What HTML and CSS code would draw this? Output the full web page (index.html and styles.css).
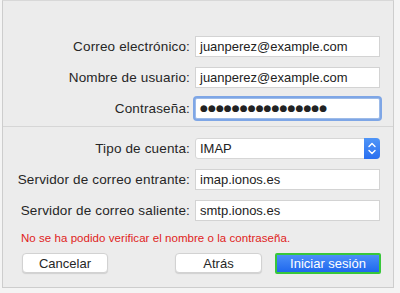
FILE: index.html
```html
<!DOCTYPE html>
<html lang="es">
<head>
  <meta charset="UTF-8">
  <meta name="viewport" content="width=device-width, initial-scale=1.0">
  <title>Añadir cuenta</title>
  <link rel="stylesheet" href="styles.css">
</head>
<body>
  <div class="window">
    <div class="form-grid">
      <label class="field-label">Correo electrónico:</label>
      <div class="field">juanperez@example.com</div>
      <label class="field-label">Nombre de usuario:</label>
      <div class="field">juanperez@example.com</div>
      <label class="field-label">Contraseña:</label>
      <div class="field field-focus"><span class="dots">●●●●●●●●●●●●●●●●</span></div>
    </div>
    <div class="divider"></div>
    <div class="form-grid">
      <label class="field-label">Tipo de cuenta:</label>
      <div class="field select">
        <span>IMAP</span>
        <span class="stepper">
          <svg width="8" height="13" viewBox="0 0 8 13"><path d="M1 4.5 L4 1.5 L7 4.5 M1 8.5 L4 11.5 L7 8.5" fill="none" stroke="#fff" stroke-width="1.4" stroke-linecap="round" stroke-linejoin="round"/></svg>
        </span>
      </div>
      <label class="field-label">Servidor de correo entrante:</label>
      <div class="field">imap.ionos.es</div>
      <label class="field-label">Servidor de correo saliente:</label>
      <div class="field">smtp.ionos.es</div>
    </div>
    <p class="error">No se ha podido verificar el nombre o la contraseña.</p>
    <div class="actions">
      <button class="btn btn-cancel">Cancelar</button>
      <button class="btn btn-back">Atrás</button>
      <button class="btn btn-primary">Iniciar sesión</button>
    </div>
  </div>
</body>
</html>
```

FILE: styles.css
```css
body { margin: 0; background: #f4f4f4; font-family: "Liberation Sans", Arial, sans-serif; font-size: 13px; color: #262626; }
.window { margin-left: 2px; width: 392px; height: 288px; box-sizing: border-box; background: #ececec; border: 1px solid #cdcdcd; border-top-color: #d8d8d8; padding-top: 35px; }
.form-grid { display: grid; grid-template-columns: 187px 185px; column-gap: 5px; row-gap: 10px; }
.field-label { text-align: right; line-height: 21px; height: 21px; font-size: 13.5px; letter-spacing: 0.15px; white-space: nowrap; }
.field { height: 21px; box-sizing: border-box; background: #fff; border: 1px solid #d3d3d3; padding: 0 4px; line-height: 19px; color: #222; }
.field-focus { border-color: #9dbbe8; box-shadow: 0 0 0 2px #7ea6e6; border-radius: 2px; }
.dots { font-family: "DejaVu Sans", sans-serif; font-size: 9px; letter-spacing: 0.1px; vertical-align: top; }
.divider { height: 1px; background: #d6d6d6; margin: 7px 0 11px; }
.select { display: flex; justify-content: space-between; padding-right: 0; border-radius: 3px; border-color: #d6d6d6; }
.stepper { width: 16px; height: 21px; margin: -1px -1px 0 0; background: linear-gradient(#4f95f7, #2a6ff0); border-radius: 0 4px 4px 0; display: flex; align-items: center; justify-content: center; }
.error { margin: 10px 0 8px 18px; font-size: 11.5px; letter-spacing: 0.05px; line-height: 14px; color: #e0231b; }
.actions { display: flex; padding-left: 19px; }
.btn { height: 20px; box-sizing: border-box; font-family: inherit; font-size: 13px; background: #fff; color: #262626; border: 1px solid #d2d2d2; border-radius: 4px; padding: 0; box-shadow: 0 1px 1px rgba(0,0,0,0.12); }
.btn-cancel { width: 86px; }
.btn-back { width: 87px; margin-left: 67px; }
.btn-primary { width: 106px; height: 21px; margin-left: 13px; color: #fff; border: 2px solid #38c73a; border-radius: 2px; background: linear-gradient(#4b8ff7, #1f68ee); box-shadow: none; }
```
